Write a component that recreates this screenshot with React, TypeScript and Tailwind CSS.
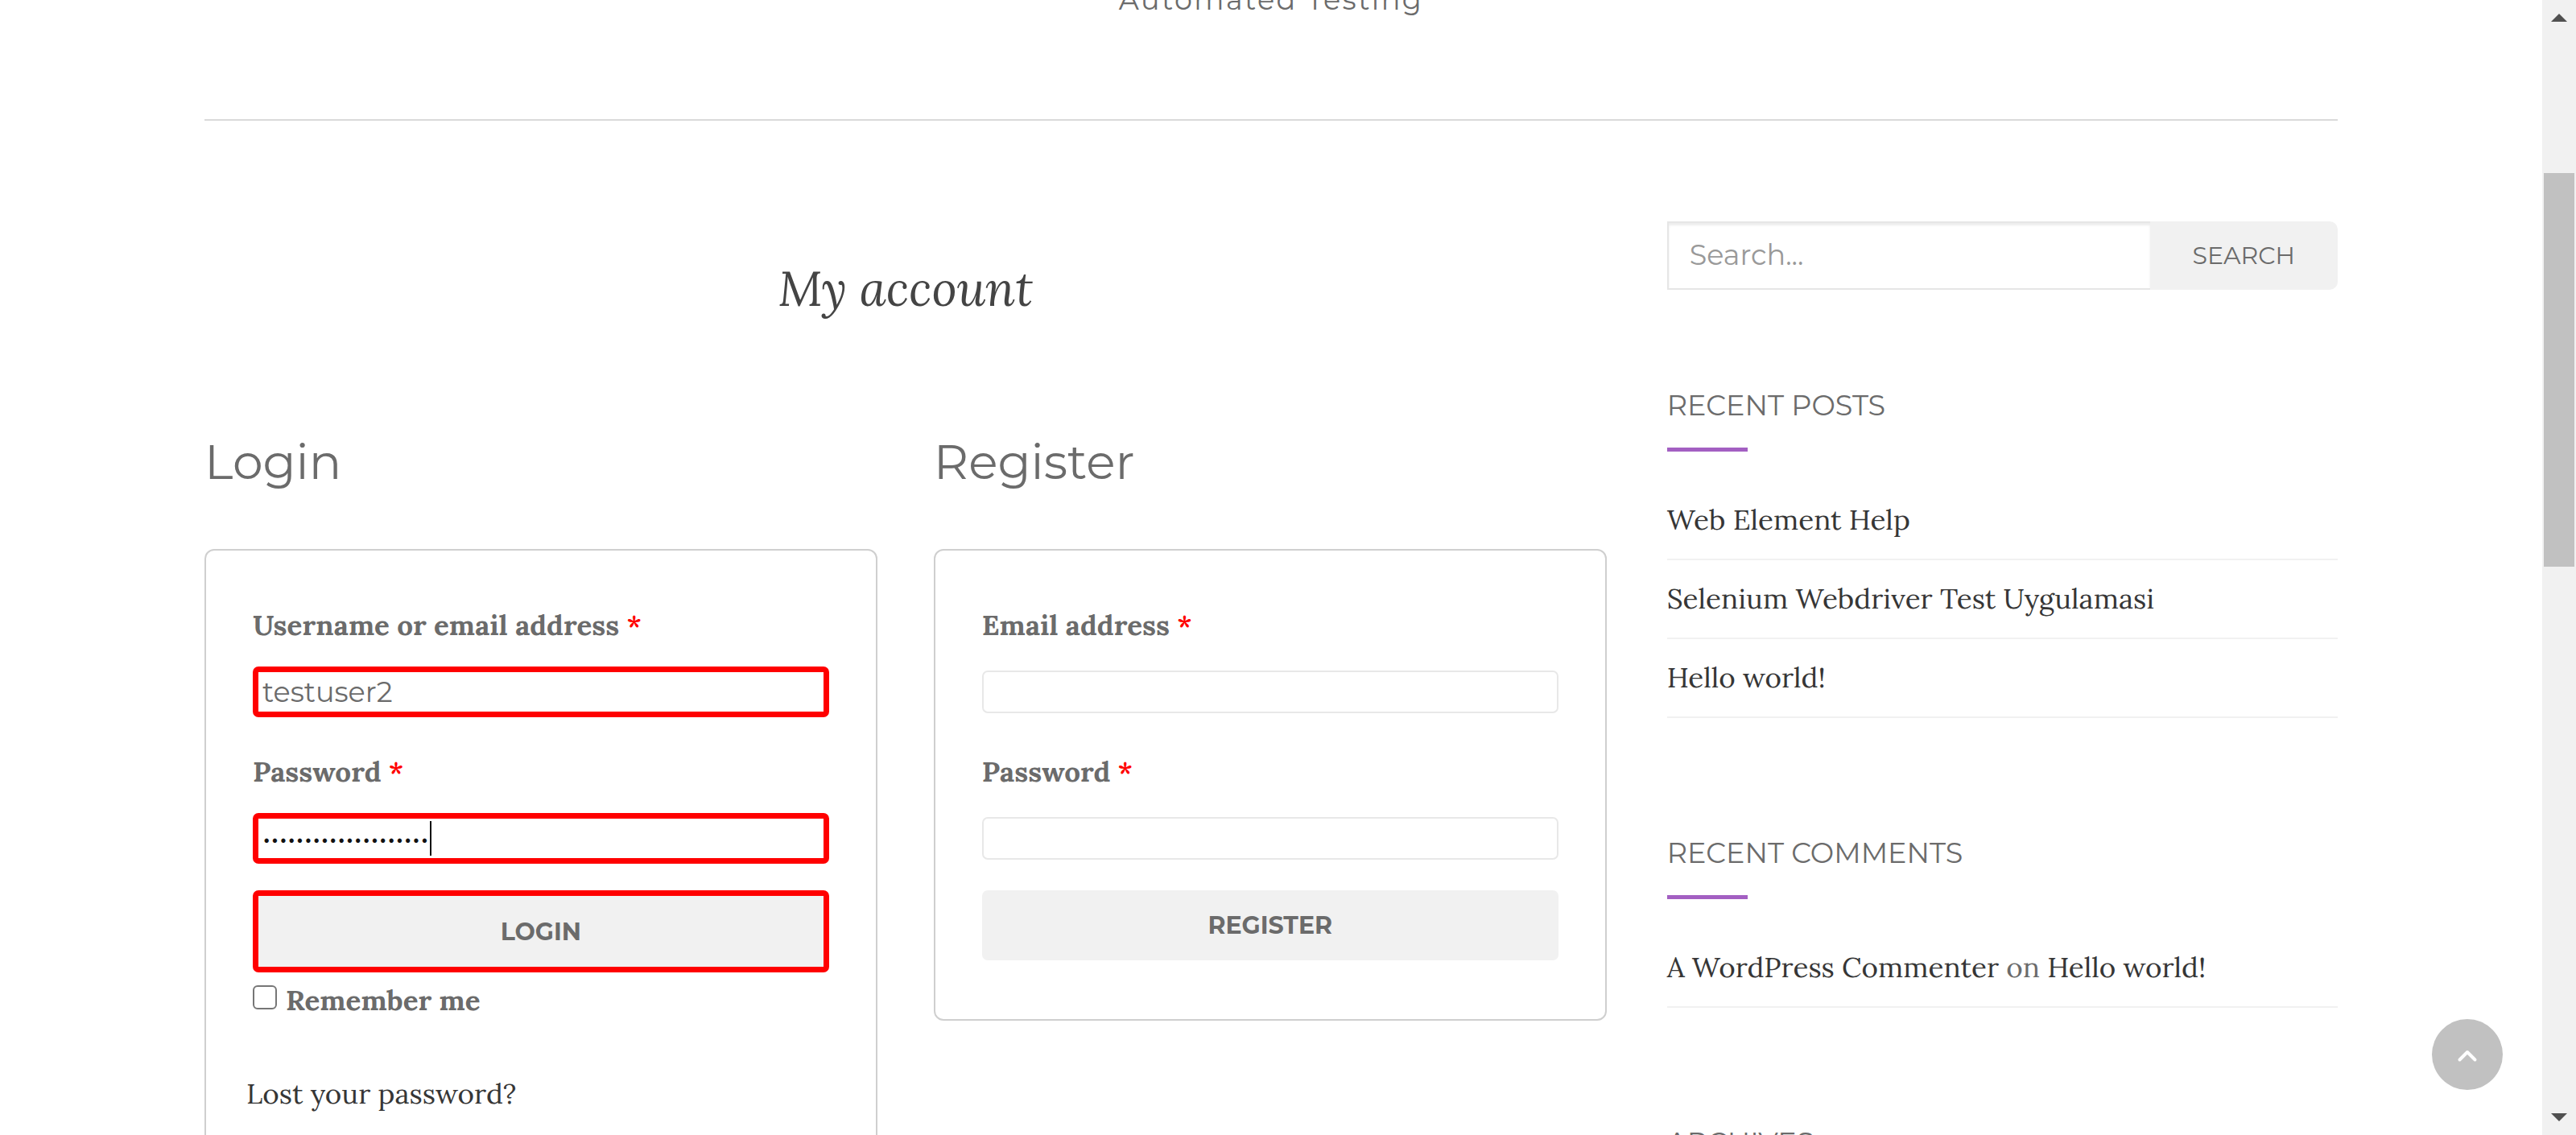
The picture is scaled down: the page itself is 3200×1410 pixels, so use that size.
import type { ReactNode } from "react";

function Field({
  id,
  label,
  children,
}: {
  id: string;
  label: string;
  children: ReactNode;
}) {
  return (
    <div>
      <label htmlFor={id} className="block leading-[70px] font-bold">
        {label} <span className="font-semibold text-[#ff0000]">*</span>
      </label>
      <div className="relative mt-4 flex h-[63px] items-center">{children}</div>
    </div>
  );
}

function Card({ title, children }: { title: string; children: ReactNode }) {
  return (
    <section>
      <h2 className="font-['Montserrat',sans-serif] text-[60px] leading-[66px]">{title}</h2>
      <form
        className="mt-[75px] rounded-[12px] border-2 border-[#cfcfcf] p-[58px]"
        onSubmit={(e) => e.preventDefault()}
      >
        {children}
      </form>
    </section>
  );
}

function Widget({ title, children }: { title: string; children?: ReactNode }) {
  return (
    <section>
      <h3 className="font-['Montserrat',sans-serif] leading-[50px] uppercase">{title}</h3>
      <div className="mt-[27px] h-[5px] w-[100px] bg-[#a35fc2]" />
      <ul className="mt-[37px]">{children}</ul>
    </section>
  );
}

function Item({ children }: { children: ReactNode }) {
  return <li className="border-b-2 border-[#f1f1f1] py-[18px] leading-[60px]">{children}</li>;
}

function Link({ children }: { children: ReactNode }) {
  return (
    <a href="#" className="text-[#363636]">
      {children}
    </a>
  );
}

const plainInput = "h-[53px] w-full rounded-[7px] border-2 border-[#e8e8e8] bg-white px-[5px] outline-none";
const markedInput =
  "h-[63px] w-full rounded-[7px] border-[7px] border-[#ff0000] bg-white px-[5px] font-['Montserrat',sans-serif] outline-none";

export default function App() {
  return (
    <div className="flex h-screen overflow-hidden bg-white font-['Lora',serif] text-[35px] text-[#6b6b6b]">
      <div className="relative flex flex-1 justify-center overflow-hidden">
        <div className="flex w-full max-w-[2650px] flex-col">
          <header className="-mt-8 border-b-2 border-[#dadada] pb-[116px] text-center">
            <p className="font-['Montserrat',sans-serif] leading-[64px] tracking-[0.07em]">
              Automated Testing
            </p>
          </header>

          <div className="grid grid-cols-3 gap-[75px] pt-[125px]">
            <main className="col-span-2 pt-10">
              <h1 className="text-center text-[60px] leading-[86px] text-[#444444] italic">
                My account
              </h1>

              <div className="mt-[140px] grid grid-cols-2 items-start gap-[70px]">
                <Card title="Login">
                  <div className="flex flex-col gap-[33px]">
                    <Field id="username" label="Username or email address">
                      <input id="username" type="text" defaultValue="testuser2" className={markedInput} />
                    </Field>
                    <Field id="password" label="Password">
                      <input
                        id="password"
                        type="password"
                        defaultValue="Testuser2Password123"
                        className={`${markedInput} text-[#111111]`}
                      />
                      <span className="absolute left-[220px] h-[43px] w-[2px] bg-[#111111]" />
                    </Field>
                    <button
                      type="submit"
                      className="h-[102px] w-full rounded-[7px] border-[7px] border-[#ff0000] bg-[#f1f1f1] font-['Montserrat',sans-serif] text-[30px] font-bold uppercase"
                    >
                      Login
                    </button>
                  </div>
                  <label className="flex items-start gap-[11px] leading-[70px] font-bold">
                    <input
                      type="checkbox"
                      className="mt-4 size-[30px] appearance-none rounded-[6px] border-2 border-[#767676] bg-white"
                    />
                    Remember me
                  </label>
                  <p className="mt-[46px] -ml-2 leading-[70px]">
                    <Link>Lost your password?</Link>
                  </p>
                </Card>

                <Card title="Register">
                  <div className="mb-[15px] flex flex-col gap-[33px]">
                    <Field id="reg-email" label="Email address">
                      <input id="reg-email" type="email" className={plainInput} />
                    </Field>
                    <Field id="reg-password" label="Password">
                      <input id="reg-password" type="password" className={plainInput} />
                    </Field>
                    <button
                      type="submit"
                      className="h-[87px] w-full rounded-[7px] bg-[#f1f1f1] font-['Montserrat',sans-serif] text-[30px] font-bold uppercase"
                    >
                      Register
                    </button>
                  </div>
                </Card>
              </div>
            </main>

            <aside>
              <form
                className="flex h-[85px] font-['Montserrat',sans-serif]"
                onSubmit={(e) => e.preventDefault()}
              >
                <input
                  type="text"
                  aria-label="Search"
                  placeholder="Search..."
                  className="min-w-0 flex-1 border-2 border-r-0 border-[#e6e6e6] bg-white px-[26px] shadow-[inset_0_3px_3px_rgba(0,0,0,0.075)] outline-none placeholder:text-[#999999]"
                />
                <button
                  type="submit"
                  className="rounded-r-[10px] bg-[#f1f1f1] px-[53px] text-[30px] uppercase"
                >
                  Search
                </button>
              </form>

              <div className="mt-[119px] flex flex-col gap-[143px]">
                <Widget title="Recent Posts">
                  <Item>
                    <Link>Web Element Help</Link>
                  </Item>
                  <Item>
                    <Link>Selenium Webdriver Test Uygulamasi</Link>
                  </Item>
                  <Item>
                    <Link>Hello world!</Link>
                  </Item>
                </Widget>
                <Widget title="Recent Comments">
                  <Item>
                    <Link>A WordPress Commenter</Link> on <Link>Hello world!</Link>
                  </Item>
                </Widget>
                <Widget title="Archives" />
              </div>
            </aside>
          </div>
        </div>

        <button
          type="button"
          aria-label="Back to top"
          className="absolute right-[49px] bottom-14 size-[88px] rounded-full bg-[#c1c1c1]"
        >
          <svg viewBox="0 0 88 88" className="size-full" fill="none" aria-hidden="true">
            <path
              d="M34.5 50.5 44 41l9.5 9.5"
              stroke="#fff"
              strokeWidth="4"
              strokeLinecap="round"
              strokeLinejoin="round"
            />
          </svg>
        </button>
      </div>

      <div className="flex w-[42px] flex-col bg-[#f1f1f1]" aria-hidden="true">
        <div className="flex h-[44px] items-center justify-center">
          <svg viewBox="0 0 20 10" className="h-[10px] w-[20px]">
            <path d="M10 0 20 10H0z" fill="#505050" />
          </svg>
        </div>
        <div className="flex flex-1 flex-col px-[2px] pt-[171px]">
          <div className="h-[489px] bg-[#c1c1c1]" />
        </div>
        <div className="flex h-[44px] items-center justify-center">
          <svg viewBox="0 0 20 10" className="h-[10px] w-[20px]">
            <path d="M0 0h20L10 10z" fill="#505050" />
          </svg>
        </div>
      </div>
    </div>
  );
}
